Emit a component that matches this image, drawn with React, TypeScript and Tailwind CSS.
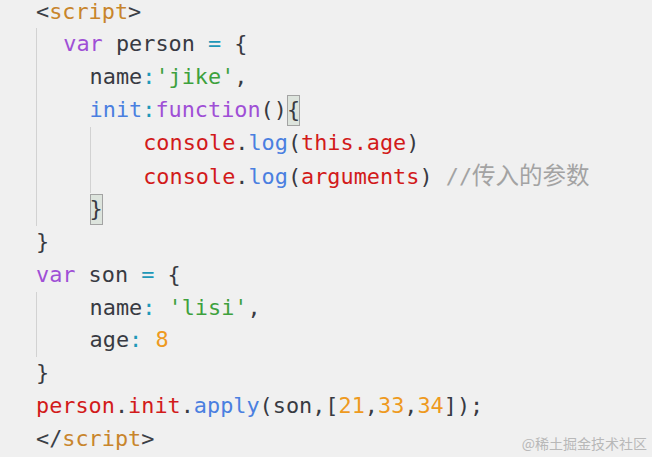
const C = {
  punct: "text-[#3b3f46]",
  tag: "text-[#c8852c]",
  kw: "text-[#9f4fd6]",
  id: "text-[#383a42]",
  op: "text-[#1e98b8]",
  str: "text-[#3ea13d]",
  prop: "text-[#4a7fe0]",
  red: "text-[#d21a1a]",
  num: "text-[#ee9a1e]",
  cmt: "text-[#a3a3a3]",
}

type Tok = [string, string] | { bracket: string }

function Guide({ cols }: { cols: number }) {
  return (
    <span className="inline-block h-full border-l border-[#d2d2d2] align-top whitespace-pre">
      {" ".repeat(cols)}
    </span>
  )
}

function Indent({ cols }: { cols: number }) {
  return <span className="inline-block h-full align-top whitespace-pre">{" ".repeat(cols)}</span>
}

function Line({ indent, toks }: { indent: React.ReactNode; toks: Tok[] }) {
  return (
    <div className="flex h-[32.9px] items-stretch whitespace-pre leading-[32.9px]">
      {indent}
      <span>
        {toks.map((t, i) =>
          Array.isArray(t) ? (
            <span key={i} className={t[1]}>
              {t[0]}
            </span>
          ) : (
            <span
              key={i}
              className="inline-block h-[31px] bg-[#dde4dd] leading-[29px] text-[#383a42] outline outline-1 -outline-offset-1 outline-[#a3a3a3]"
            >
              {t.bracket}
            </span>
          ),
        )}
      </span>
    </div>
  )
}

export default function App() {
  return (
    <div className="relative h-[457px] w-full overflow-hidden bg-[#f0f0f0]">
      <div
        className="mt-[-4.5px] pl-[36px] text-[21.85px]"
        style={{ fontFamily: '"DejaVu Sans Mono", "Noto Sans CJK SC", monospace' }}
      >
        <Line indent={null} toks={[["<", C.punct], ["script", C.tag], [">", C.punct]]} />
        <Line
          indent={<Guide cols={2} />}
          toks={[["var", C.kw], [" person ", C.id], ["=", C.op], [" {", C.id]]}
        />
        <Line
          indent={<Guide cols={4} />}
          toks={[["name", C.id], [":", C.op], ["'jike'", C.str], [",", C.id]]}
        />
        <Line
          indent={<Guide cols={4} />}
          toks={[["init", C.prop], [":", C.op], ["function", C.kw], ["()", C.id], { bracket: "{" }]}
        />
        <Line
          indent={
            <>
              <Guide cols={4} />
              <Guide cols={4} />
            </>
          }
          toks={[["console", C.red], [".", C.id], ["log", C.prop], ["(", C.id], ["this.age", C.red], [")", C.id]]}
        />
        <Line
          indent={
            <>
              <Guide cols={4} />
              <Guide cols={4} />
            </>
          }
          toks={[
            ["console", C.red],
            [".", C.id],
            ["log", C.prop],
            ["(", C.id],
            ["arguments", C.red],
            [")", C.id],
            [" //", C.cmt],
            ["传入的参数", C.cmt + " text-[23.5px]"],
          ]}
        />
        <Line indent={<Guide cols={4} />} toks={[{ bracket: "}" }]} />
        <Line indent={null} toks={[["}", C.id]]} />
        <Line indent={null} toks={[["var", C.kw], [" son ", C.id], ["=", C.op], [" {", C.id]]} />
        <Line
          indent={<Guide cols={4} />}
          toks={[["name", C.id], [":", C.op], [" ", C.id], ["'lisi'", C.str], [",", C.id]]}
        />
        <Line indent={<Guide cols={4} />} toks={[["age", C.id], [":", C.op], [" ", C.id], ["8", C.num]]} />
        <Line indent={null} toks={[["}", C.id]]} />
        <Line
          indent={null}
          toks={[
            ["person", C.red],
            [".", C.id],
            ["init", C.red],
            [".", C.id],
            ["apply", C.prop],
            ["(son,[", C.id],
            ["21", C.num],
            [",", C.id],
            ["33", C.num],
            [",", C.id],
            ["34", C.num],
            ["]);", C.id],
          ]}
        />
        <Line indent={null} toks={[["</", C.punct], ["script", C.tag], [">", C.punct]]} />
      </div>
      <div
        className="absolute right-[5px] bottom-[3px] text-[14px] text-[#b8b8b8]"
        style={{ fontFamily: '"Noto Sans CJK SC", sans-serif' }}
      >
        @稀土掘金技术社区
      </div>
    </div>
  )
}
